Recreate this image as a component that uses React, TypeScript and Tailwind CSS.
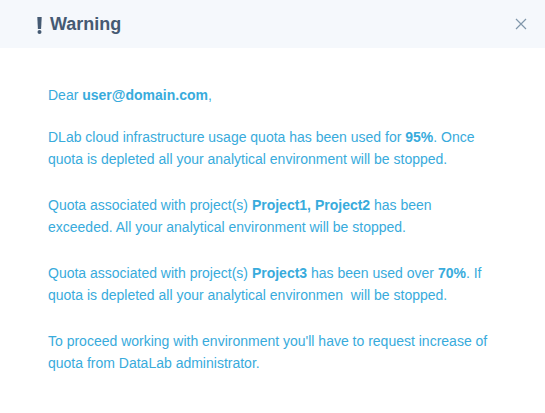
export default function App() {
  return (
    <div className="w-[545px] h-[413px] bg-white font-['Liberation_Sans',Arial,sans-serif]">
      <div className="h-[48px] bg-[#f5f8fc] flex items-center pl-[37px] pr-[18px]">
        <svg width="5" height="17" viewBox="0 0 5 17" className="mr-[8px] mt-[2px] text-[#455a73]" fill="currentColor">
          <path d="M0.3 0 H4.7 L4.1 12 H0.9 Z" />
          <circle cx="2.5" cy="15" r="2" />
        </svg>
        <h2 className="text-[#455a73] text-[18px] font-bold">Warning</h2>
        <button className="ml-auto text-[#8197ab] w-[12px] h-[12px] flex items-center justify-center">
          <svg width="12" height="12" viewBox="0 0 12 12" fill="none" stroke="currentColor" strokeWidth="1.2">
            <path d="M1 1 L11 11 M11 1 L1 11" />
          </svg>
        </button>
      </div>
      <div className="pl-[48px] pr-[54px] pt-[36px] text-[14px] leading-[22.5px] text-[#38abdc]">
        <p className="mb-[19px]">
          Dear <b>user@domain.com</b>,
        </p>
        <p className="mb-[23px]">
          DLab cloud infrastructure usage quota has been used for <b>95%</b>. Once quota is depleted all your analytical environment will be stopped.
        </p>
        <p className="mb-[23px]">
          Quota associated with project(s) <b>Project1, Project2</b> has been exceeded. All your analytical environment will be stopped.
        </p>
        <p className="mb-[23px]">
          Quota associated with project(s) <b>Project3</b> has been used over <b>70%</b>. If quota is depleted all your analytical environmen&nbsp; will be stopped.
        </p>
        <p>
          To proceed working with environment you'll have to request increase of quota from DataLab administrator.
        </p>
      </div>
    </div>
  );
}
